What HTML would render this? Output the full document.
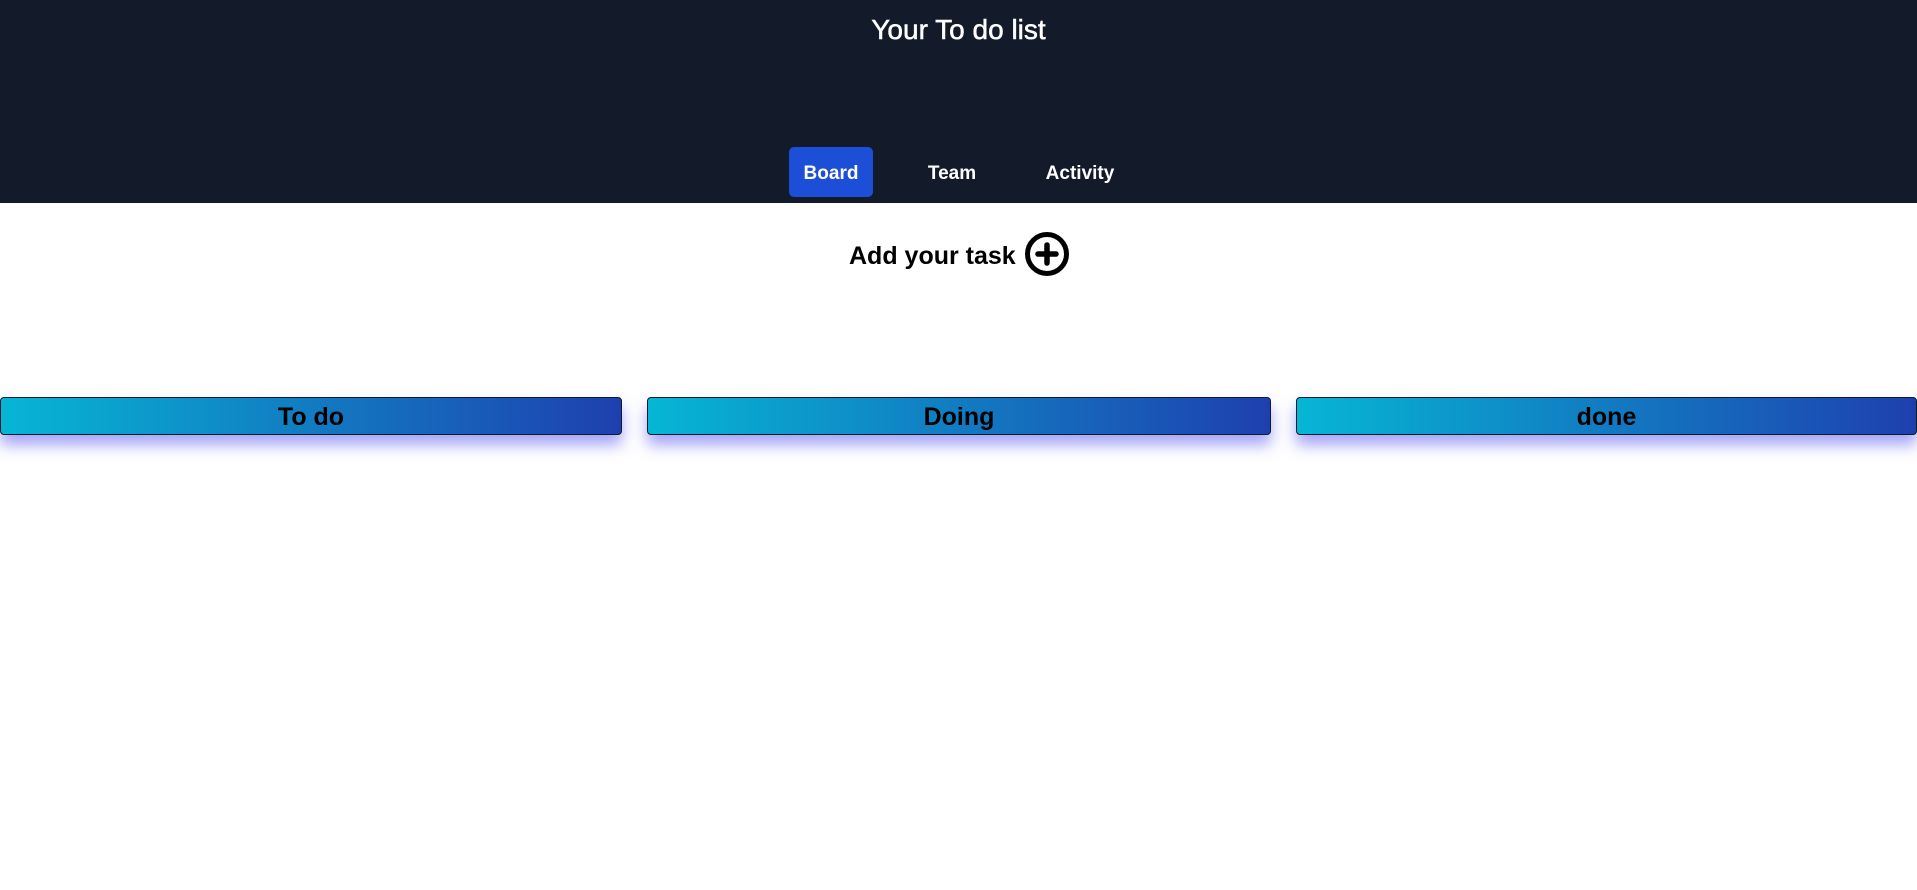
<!DOCTYPE html>
<html><head><meta charset="utf-8"><style>
*{box-sizing:border-box;margin:0;padding:0}
body{width:1917px;height:890px;background:#fff;font-family:"Liberation Sans",sans-serif;overflow:hidden;position:relative}
.hdr{position:absolute;left:0;top:0;width:1917px;height:203px;background:#131a29}
.title{position:absolute;top:14px;width:100%;text-align:center;color:#fff;font-size:28px;-webkit-text-stroke:0.5px #fff}
.nav{position:absolute;top:147px;height:50px;color:#fff;font-weight:bold;font-size:19px;line-height:53px;text-align:center}
.board{left:789px;width:84px;background:#1d4ed8;border-radius:5px}
.add{position:absolute;left:849px;top:242px;font-size:25px;font-weight:bold;color:#000}
.col{position:absolute;top:397px;height:38px;border:1.5px solid #0f1a2a;border-radius:4px;background:linear-gradient(90deg,#06b6d4,#1e40af);box-shadow:0 10px 15px rgba(90,90,240,.55);text-align:center;font-weight:bold;font-size:25px;line-height:38px;color:#000}
</style></head><body>
<div class="hdr">
<div class="title">Your To do list</div>
<div class="nav board">Board</div>
<div class="nav" style="left:912px;width:80px">Team</div>
<div class="nav" style="left:1035px;width:90px">Activity</div>
</div>
<div class="add">Add your task</div>
<svg style="position:absolute;left:1024px;top:231px" width="46" height="46" viewBox="0 0 46 46"><circle cx="23" cy="23" r="19.5" fill="none" stroke="#000" stroke-width="5"/><path d="M23 14v18M14 23h18" stroke="#000" stroke-width="5.5" stroke-linecap="round"/></svg>
<div class="col" style="left:0;width:622px">To do</div>
<div class="col" style="left:647px;width:624px">Doing</div>
<div class="col" style="left:1296px;width:621px">done</div>
</body></html>
